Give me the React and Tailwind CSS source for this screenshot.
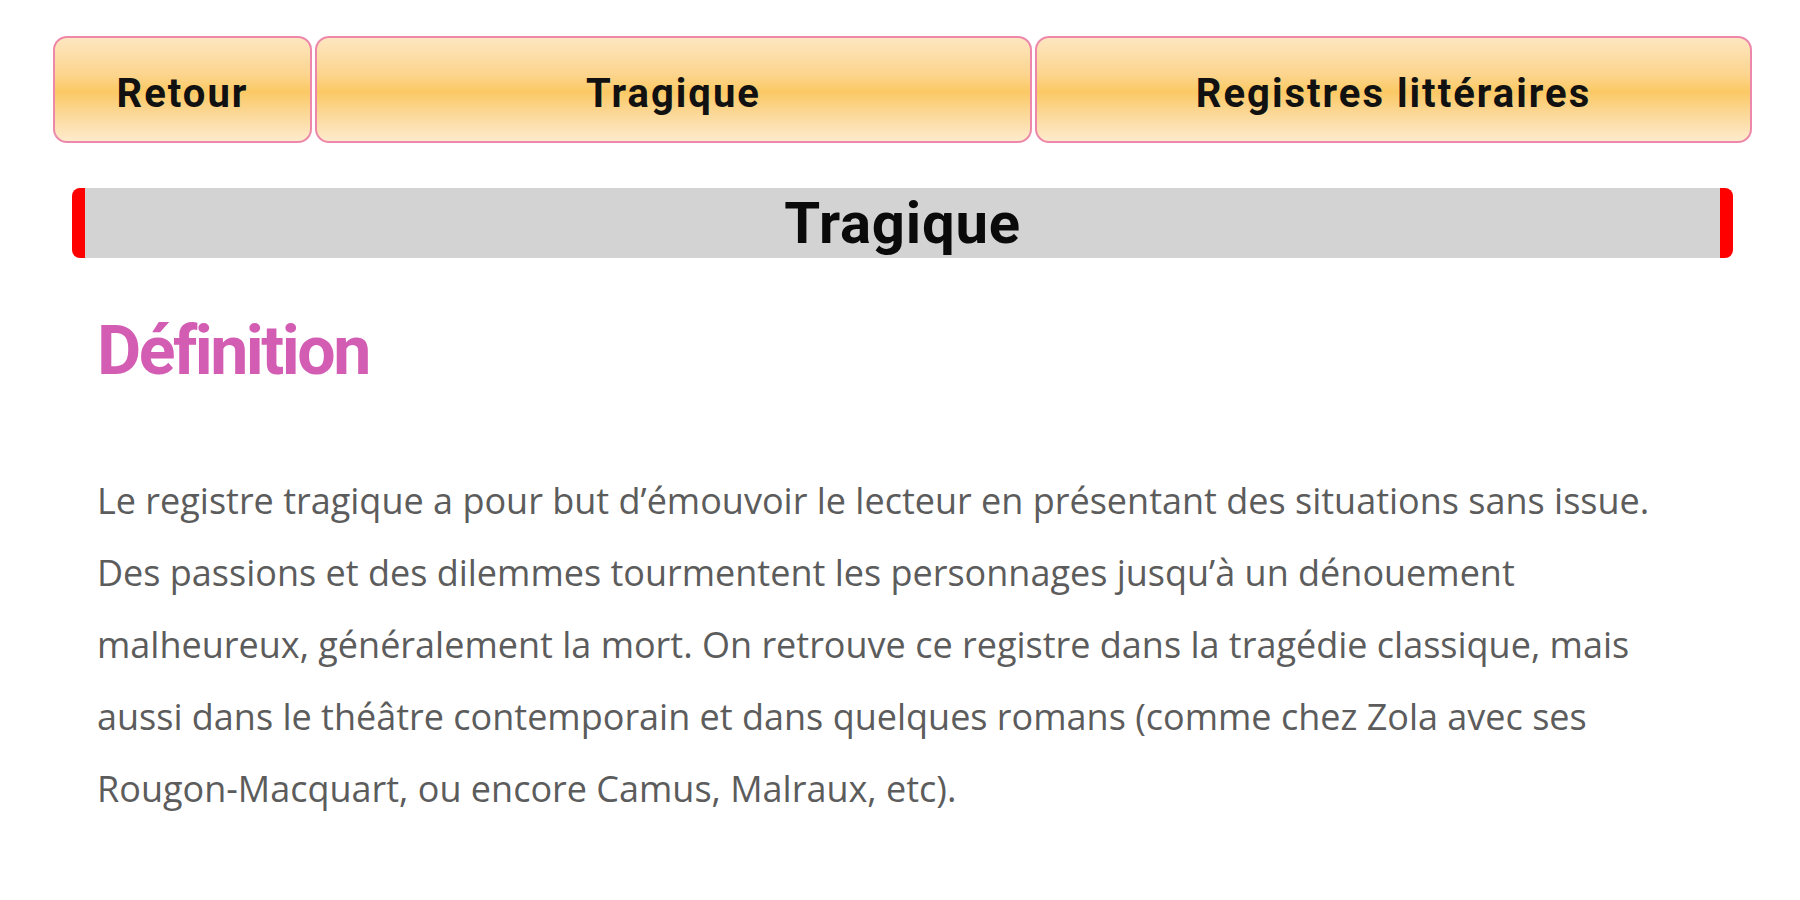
export default function App() {
  const btn =
    "h-full rounded-[14px] border-2 border-[#ee88ab] bg-[linear-gradient(to_bottom,#fde6c0_0%,#fcd58f_35%,#fbc964_52%,#fcd99b_75%,#fdebcc_100%)] flex items-center justify-center pt-[8px] text-[40px] leading-none font-bold tracking-[2px] text-[#111111]";
  return (
    <div className="min-h-screen w-full bg-white pl-[53px] pr-[48px] pt-[36px]" style={{ fontFamily: "Roboto, 'Liberation Sans', sans-serif" }}>
      <div className="flex h-[107px] gap-[3px]">
        <div className={`${btn} w-[259px] shrink-0`}>Retour</div>
        <div className={`${btn} flex-1`}>Tragique</div>
        <div className={`${btn} flex-1`}>Registres littéraires</div>
      </div>
      <div className="mx-[19px] mt-[45px] flex h-[70px] items-center justify-center rounded-[8px] border-x-[13px] border-[#ff0000] bg-[#d3d3d3]">
        <h1 className="text-[58px] font-bold leading-none tracking-[0.8px] text-[#0a0a0a]">Tragique</h1>
      </div>
      <div className="pl-[44px] pt-[59px]">
        <h2 className="text-[68px] font-bold leading-none tracking-[-2.5px] text-[#d45db4]">Définition</h2>
        <p
          className="mt-[80px] text-[36px] leading-[72px] text-[#5c5c5c]"
          style={{ fontFamily: "'Open Sans', Lato, sans-serif" }}
        >
          Le registre tragique a pour but d’émouvoir le lecteur en présentant des situations sans issue.
          <br />
          Des passions et des dilemmes tourmentent les personnages jusqu’à un dénouement
          <br />
          malheureux, généralement la mort. On retrouve ce registre dans la tragédie classique, mais
          <br />
          aussi dans le théâtre contemporain et dans quelques romans (comme chez Zola avec ses
          <br />
          Rougon-Macquart, ou encore Camus, Malraux, etc).
        </p>
      </div>
    </div>
  );
}
